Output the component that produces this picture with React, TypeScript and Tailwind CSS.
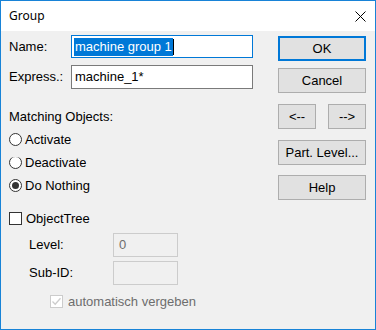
import React from 'react';

const font = { fontFamily: '"Liberation Sans", Arial, sans-serif' };

function Radio({ checked }: { checked?: boolean }) {
  return (
    <span className="flex h-[13px] w-[13px] shrink-0 items-center justify-center rounded-full border border-[#333333] bg-white">
      {checked && <span className="h-[7px] w-[7px] rounded-full bg-[#333333]" />}
    </span>
  );
}

function Button({ label, primary, className = '' }: { label: string; primary?: boolean; className?: string }) {
  return (
    <div
      className={`flex h-[25px] items-center justify-center bg-[#e1e1e1] text-[13px] text-black ${
        primary ? 'border-2 border-[#0078d7]' : 'border border-[#adadad]'
      } ${className}`}
    >
      {label}
    </div>
  );
}

export default function App() {
  return (
    <div className="flex h-[330px] w-[376px] flex-col border border-[#1883d7] bg-[#f0f0f0] text-[13px] leading-4 text-black" style={font}>
      {/* title bar */}
      <div className="flex h-[30px] shrink-0 items-center justify-between bg-white pl-2 pr-[9px]">
        <span className="text-[12px] text-black" style={{ fontFamily: '"Noto Sans", "Open Sans", sans-serif' }}>Group</span>
        <svg width="11" height="11" viewBox="0 0 11 11">
          <path d="M0.5 0.5 L10.5 10.5 M10.5 0.5 L0.5 10.5" stroke="#000" strokeWidth="1" fill="none" />
        </svg>
      </div>

      <div className="flex flex-1">
        {/* left side */}
        <div className="flex flex-1 flex-col pl-2 pt-[4px]">
          <div className="flex h-[23px] items-center">
            <span className="w-[62px]">Name:</span>
            <div className="flex h-[23px] w-[182px] items-center border border-[#0078d7] bg-white pl-[2px]">
              <span className="bg-[#0078d7] px-px py-px text-white">machine group 1</span>
              <span className="h-[16px] w-px bg-black" />
            </div>
          </div>
          <div className="mt-[7px] flex h-[24px] items-center">
            <span className="w-[62px]">Express.:</span>
            <div className="flex h-[24px] w-[182px] items-center border border-[#7a7a7a] bg-white pl-[3px]">machine_1*</div>
          </div>

          <div className="mt-[16px] flex h-[23px] items-center">Matching Objects:</div>
          <div className="flex h-[23px] items-center gap-[3px]">
            <Radio />
            <span>Activate</span>
          </div>
          {/* this row is drawn half-clipped in the original dialog */}
          <div className="flex h-[23px] items-center">
            <div className="flex h-[16px] items-center gap-[3px] [clip-path:inset(3px_0_1px_0)]">
              <Radio />
              <span>Deactivate</span>
            </div>
          </div>
          <div className="flex h-[23px] items-center gap-[3px]">
            <Radio checked />
            <span>Do Nothing</span>
          </div>

          <div className="mt-[10px] flex h-[23px] items-center gap-[4px]">
            <span className="h-[13px] w-[13px] border border-[#333333] bg-white" />
            <span>ObjectTree</span>
          </div>
          <div className="ml-[20px] mt-[3px] flex h-[24px] items-center">
            <span className="w-[84px]">Level:</span>
            <div className="flex h-[24px] w-[65px] items-center border border-[#cccccc] pl-[5px] text-[#6d6d6d]">0</div>
          </div>
          <div className="ml-[20px] mt-[4px] flex h-[24px] items-center">
            <span className="w-[84px]">Sub-ID:</span>
            <div className="h-[24px] w-[65px] border border-[#cccccc]" />
          </div>
          <div className="ml-[41px] mt-[5px] flex h-[23px] items-center gap-[5px]">
            <span className="flex h-[13px] w-[13px] items-center justify-center border border-[#cccccc] bg-white">
              <svg width="9" height="9" viewBox="0 0 9 9">
                <path d="M0.5 4.5 L3.2 7.2 L8.5 1.2" stroke="#cccccc" strokeWidth="1.3" fill="none" />
              </svg>
            </span>
            <span className="text-[#6d6d6d]">automatisch vergeben</span>
          </div>
        </div>

        {/* right side */}
        <div className="mr-[9px] flex w-[88px] flex-col pt-[5px]">
          <Button label="OK" primary />
          <Button label="Cancel" className="mt-[7px]" />
          <div className="mt-[11px] flex justify-between">
            <Button label="<--" className="w-[38px]" />
            <Button label="-->" className="w-[38px]" />
          </div>
          <Button label="Part. Level..." className="mt-[11px]" />
          <Button label="Help" className="mt-[10px]" />
        </div>
      </div>
    </div>
  );
}
